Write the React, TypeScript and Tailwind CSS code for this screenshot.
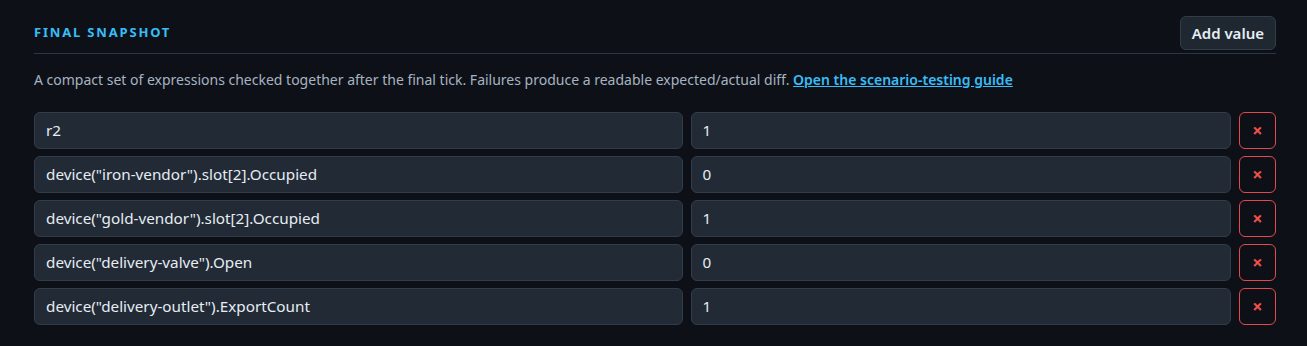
const rows = [
  { expr: "r2", value: "1" },
  { expr: 'device("iron-vendor").slot[2].Occupied', value: "0" },
  { expr: 'device("gold-vendor").slot[2].Occupied', value: "1" },
  { expr: 'device("delivery-valve").Open', value: "0" },
  { expr: 'device("delivery-outlet").ExportCount', value: "1" },
];

export default function App() {
  return (
    <div className="min-h-[346px] bg-[#0d1117] pl-[34px] pr-[31px] pt-4 font-['Noto_Sans',sans-serif] text-[#e6edf3]">
      <div className="flex items-center justify-between border-b border-[#2d3643] pb-[3px]">
        <h2 className="text-[13px] font-bold uppercase tracking-[0.14em] text-[#38bdf8]">
          Final snapshot
        </h2>
        <button className="h-[34px] rounded-md border border-[#333d4a] bg-[#1f2731] px-[11px] text-[15px] font-semibold text-[#e6edf3]">
          Add value
        </button>
      </div>

      <p className="mt-[16px] text-[14px] leading-5 text-[#a7b3c2]">
        A compact set of expressions checked together after the final tick. Failures produce a
        readable expected/actual diff.{" "}
        <a href="#" className="font-semibold text-[#38bdf8] underline">
          Open the scenario-testing guide
        </a>
      </p>

      <div className="mt-[22px] flex flex-col gap-[7px]">
        {rows.map((row) => (
          <div key={row.expr} className="grid grid-cols-[6fr_5fr_37px] gap-2">
            <div className="flex h-[37px] items-center rounded-md border border-[#333d4a] bg-[#212a35] px-[11px] text-[15.25px]">
              {row.expr}
            </div>
            <div className="flex h-[37px] items-center rounded-md border border-[#333d4a] bg-[#212a35] px-[11px] text-[15.25px]">
              {row.value}
            </div>
            <button className="flex h-[37px] items-center justify-center rounded-md border border-[#e5484d] text-[18px] font-bold text-[#f0504a]">
              ×
            </button>
          </div>
        ))}
      </div>
    </div>
  );
}
